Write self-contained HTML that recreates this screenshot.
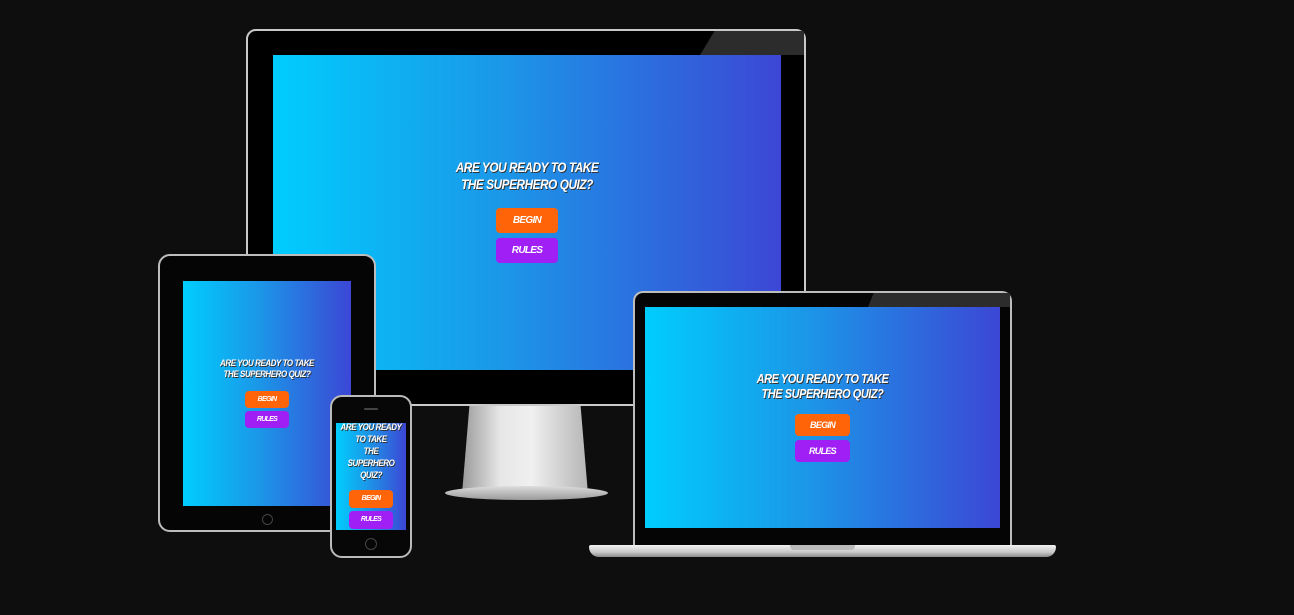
<!DOCTYPE html><html><head><style>
body{margin:0;width:1294px;height:615px;background:#0f0e0f;position:relative;overflow:hidden;font-family:"Liberation Sans",sans-serif}
.a{position:absolute}
.scr{background:linear-gradient(90deg,#00cdfd,#1b97e8 45%,#3c47d5);overflow:hidden}
.t{position:absolute;left:-20px;right:-20px;text-align:center;color:#fff;font-weight:bold;font-style:italic;text-transform:uppercase;letter-spacing:-0.5px;text-shadow:1px 1px 0 #333;transform:scaleX(.84)}
.b{position:absolute;border-radius:4px;color:#fff;font-weight:bold;font-style:italic;text-align:center;letter-spacing:-0.7px}
.o{background:#ff6408}.p{background:#a01ff5}
</style></head><body>
<div class="a" style="left:462px;top:404px;width:126px;height:90px;background:linear-gradient(90deg,#9a9a9a,#e6e6e6 30%,#f0f0f0 55%,#b5b5b5);clip-path:polygon(6% 0,94% 0,100% 100%,0 100%)"></div>
<div class="a" style="left:445px;top:486px;width:163px;height:14px;border-radius:50%;background:linear-gradient(#ddd,#9a9a9a)"></div>
<div class="a" style="left:246px;top:29px;width:556px;height:373px;border:2px solid #c9c9c9;border-radius:10px;background:#000"></div>
<div class="a" style="left:700px;top:31px;width:104px;height:24px;background:#2c2c2c;clip-path:polygon(14% 0,100% 0,100% 100%,0 100%)"></div>
<div class="a scr" style="left:273px;top:55px;width:508px;height:315px">
<div class="t" style="top:104px;font-size:14px;line-height:17px">Are you ready to take<br>the superhero quiz?</div>
<div class="b o" style="left:223px;top:153px;width:62px;height:25px;line-height:25px;font-size:10px">BEGIN</div>
<div class="b p" style="left:223px;top:183px;width:62px;height:25px;line-height:25px;font-size:10px">RULES</div>
</div>
<div class="a" style="left:158px;top:254px;width:214px;height:274px;border:2px solid #bdbdbd;border-radius:12px;background:#050505"></div>
<div class="a scr" style="left:183px;top:281px;width:168px;height:225px">
<div class="t" style="top:77px;font-size:9.5px;line-height:11px">Are you ready to take<br>the superhero quiz?</div>
<div class="b o" style="left:62px;top:110px;width:44px;height:17px;line-height:17px;font-size:7px">BEGIN</div>
<div class="b p" style="left:62px;top:130px;width:44px;height:17px;line-height:17px;font-size:7px">RULES</div>
</div>
<div class="a" style="left:262px;top:514px;width:9px;height:9px;border-radius:50%;border:1px solid #444"></div>
<div class="a" style="left:330px;top:395px;width:78px;height:159px;border:2px solid #bbb;border-radius:12px;background:#070707"></div>
<div class="a scr" style="left:336px;top:423px;width:70px;height:107px">
<div class="t" style="top:-1px;font-size:9.5px;line-height:12px">Are you ready<br>to take<br>the<br>superhero<br>quiz?</div>
<div class="b o" style="left:13px;top:67px;width:44px;height:18px;line-height:18px;font-size:7px">BEGIN</div>
<div class="b p" style="left:13px;top:88px;width:44px;height:18px;line-height:18px;font-size:7px">RULES</div>
</div>
<div class="a" style="left:364px;top:408px;width:14px;height:2px;background:#444;border-radius:1px"></div>
<div class="a" style="left:365px;top:538px;width:10px;height:10px;border-radius:50%;border:1px solid #444"></div>
<div class="a" style="left:633px;top:291px;width:375px;height:256px;border:2px solid #bdbdbd;border-bottom:none;border-radius:10px 10px 0 0;background:#050505"></div>
<div class="a" style="left:868px;top:293px;width:142px;height:14px;background:#2c2c2c;clip-path:polygon(4% 0,100% 0,100% 100%,0 100%)"></div>
<div class="a scr" style="left:645px;top:307px;width:355px;height:221px">
<div class="t" style="top:64px;font-size:13px;line-height:15px">Are you ready to take<br>the superhero quiz?</div>
<div class="b o" style="left:150px;top:107px;width:55px;height:22px;line-height:22px;font-size:9px">BEGIN</div>
<div class="b p" style="left:150px;top:133px;width:55px;height:22px;line-height:22px;font-size:9px">RULES</div>
</div>
<div class="a" style="left:589px;top:545px;width:467px;height:12px;border-radius:2px 2px 10px 10px;background:linear-gradient(#f2f2f2,#c8c8c8 60%,#8a8a8a)"></div>
<div class="a" style="left:790px;top:545px;width:65px;height:5px;border-radius:0 0 4px 4px;background:#bbb"></div>
</body></html>
